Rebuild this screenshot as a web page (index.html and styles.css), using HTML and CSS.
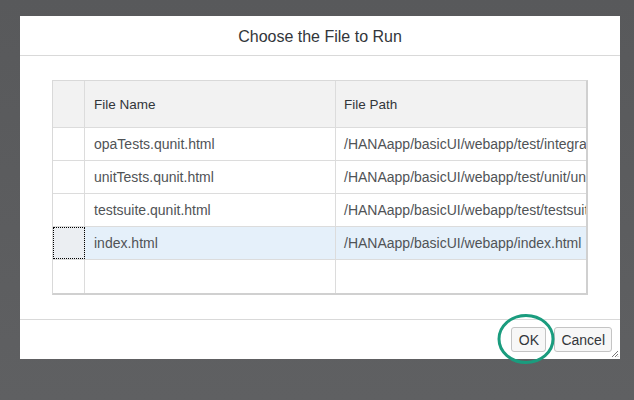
FILE: index.html
```html
<!DOCTYPE html>
<html>
<head>
<meta charset="utf-8">
<link rel="stylesheet" href="styles.css">
</head>
<body>
<div class="dialog">
  <div class="header">Choose the File to Run</div>
  <div class="content">
    <div class="table">
      <div class="row head">
        <div class="sel"></div>
        <div class="cell name">File Name</div>
        <div class="cell path">File Path</div>
      </div>
      <div class="row">
        <div class="sel"></div>
        <div class="cell name">opaTests.qunit.html</div>
        <div class="cell path">/HANAapp/basicUI/webapp/test/integration/opaTests.qunit.html</div>
      </div>
      <div class="row">
        <div class="sel"></div>
        <div class="cell name">unitTests.qunit.html</div>
        <div class="cell path">/HANAapp/basicUI/webapp/test/unit/unitTests.qunit.html</div>
      </div>
      <div class="row">
        <div class="sel"></div>
        <div class="cell name">testsuite.qunit.html</div>
        <div class="cell path">/HANAapp/basicUI/webapp/test/testsuite.qunit.html</div>
      </div>
      <div class="row selected">
        <div class="sel focus"></div>
        <div class="cell name">index.html</div>
        <div class="cell path">/HANAapp/basicUI/webapp/index.html</div>
      </div>
      <div class="row empty">
        <div class="sel"></div>
        <div class="cell name"></div>
        <div class="cell path"></div>
      </div>
    </div>
  </div>
  <div class="footer">
    <button class="btn ok">OK</button>
    <button class="btn">Cancel</button>
    <svg class="grip" width="8" height="8" viewBox="0 0 8 8">
      <path d="M7 1 L1 7 M7 4 L4 7 M7 6.5 L6.5 7" stroke="#7a7a7a" stroke-width="1"/>
    </svg>
    <svg class="ring" width="64" height="56" viewBox="0 0 64 56">
      <ellipse cx="32" cy="28" rx="27" ry="23.5" fill="none" stroke="#1a9c7e" stroke-width="3"/>
    </svg>
  </div>
</div>
</body>
</html>
```

FILE: styles.css
```css
* { box-sizing: border-box; }
html, body { height: 100%; }
body {
  margin: 0;
  padding: 16px 0 0 20px;
  background: linear-gradient(#58595b, #5f6062);
  font-family: "Liberation Sans", Arial, sans-serif;
  color: #32363a;
  overflow: hidden;
}
.dialog {
  width: 600px;
  height: 343px;
  background: #fff;
  display: flex;
  flex-direction: column;
}
.header {
  height: 40px;
  border-bottom: 1px solid #d9d9d9;
  display: flex;
  align-items: center;
  justify-content: center;
  font-size: 16px;
  color: #32363a;
  padding-top: 2px;
}
.content {
  flex: 1;
  padding: 24px 32px 0 32px;
}
.table {
  width: 536px;
  border: 1px solid #d9d9d9;
  border-right-width: 2px;
  border-bottom-width: 2px;
  border-right-color: #d0d0d0;
  border-bottom-color: #d0d0d0;
}
.row {
  display: flex;
  height: 33px;
  border-bottom: 1px solid #dcdcdc;
}
.row.head {
  height: 47px;
  background: #f2f2f2;
}
.row.empty { border-bottom: none; height: 33px; }
.sel {
  width: 32px;
  flex: none;
  border-right: 1px solid #dcdcdc;
}
.cell {
  display: flex;
  align-items: center;
  padding-left: 9px;
  font-size: 14px;
  color: #505356;
  white-space: nowrap;
  overflow: hidden;
}
.head .cell { color: #32363a; font-size: 13.5px; }
.name {
  width: 251px;
  flex: none;
  border-right: 1px solid #dcdcdc;
}
.path { flex: 1; padding-left: 8px; }
.row.selected { background: #e5f0fa; }
.sel.focus {
  background: #ebeef2;
  outline: 1px dotted #000;
  outline-offset: -1px;
}
.footer {
  height: 40px;
  border-top: 1px solid #d9d9d9;
  display: flex;
  justify-content: flex-end;
  align-items: flex-start;
  gap: 8px;
  padding: 7px 8px 0 0;
  position: relative;
}
.btn {
  height: 25px;
  border: 1px solid #c4c4c4;
  border-radius: 3px;
  background: #f7f7f7;
  font-family: "Liberation Sans", Arial, sans-serif;
  font-size: 14px;
  color: #32363a;
  padding: 0 6px;
}
.btn.ok { width: 35px; padding: 0; }
.grip {
  position: absolute;
  right: 1px;
  bottom: 1px;
}
.ring {
  position: absolute;
  left: 474px;
  top: -9px;
}
```
